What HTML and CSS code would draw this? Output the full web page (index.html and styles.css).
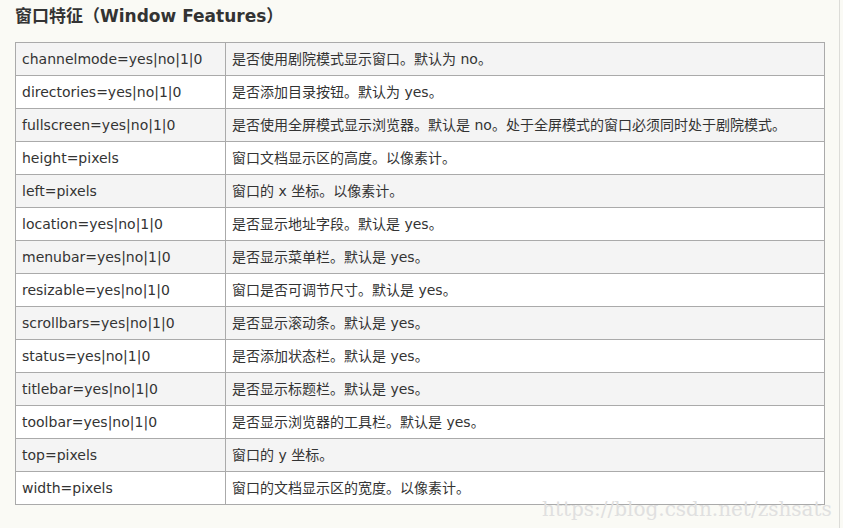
FILE: index.html
```html
<!DOCTYPE html>
<html lang="zh">
<head>
<meta charset="utf-8">
<link rel="stylesheet" href="styles.css">
</head>
<body>
<div class="page">
  <h3 class="title">窗口特征（Window Features）</h3>
  <table class="features">
    <tr><td class="key">channelmode=yes|no|1|0</td><td>是否使用剧院模式显示窗口。默认为 no。</td></tr>
    <tr><td class="key">directories=yes|no|1|0</td><td>是否添加目录按钮。默认为 yes。</td></tr>
    <tr><td class="key">fullscreen=yes|no|1|0</td><td>是否使用全屏模式显示浏览器。默认是 no。处于全屏模式的窗口必须同时处于剧院模式。</td></tr>
    <tr><td class="key">height=pixels</td><td>窗口文档显示区的高度。以像素计。</td></tr>
    <tr><td class="key">left=pixels</td><td>窗口的 x 坐标。以像素计。</td></tr>
    <tr><td class="key">location=yes|no|1|0</td><td>是否显示地址字段。默认是 yes。</td></tr>
    <tr><td class="key">menubar=yes|no|1|0</td><td>是否显示菜单栏。默认是 yes。</td></tr>
    <tr><td class="key">resizable=yes|no|1|0</td><td>窗口是否可调节尺寸。默认是 yes。</td></tr>
    <tr><td class="key">scrollbars=yes|no|1|0</td><td>是否显示滚动条。默认是 yes。</td></tr>
    <tr><td class="key">status=yes|no|1|0</td><td>是否添加状态栏。默认是 yes。</td></tr>
    <tr><td class="key">titlebar=yes|no|1|0</td><td>是否显示标题栏。默认是 yes。</td></tr>
    <tr><td class="key">toolbar=yes|no|1|0</td><td>是否显示浏览器的工具栏。默认是 yes。</td></tr>
    <tr><td class="key">top=pixels</td><td>窗口的 y 坐标。</td></tr>
    <tr><td class="key">width=pixels</td><td>窗口的文档显示区的宽度。以像素计。</td></tr>
  </table>
  <div class="watermark">https://blog.csdn.net/zshsats</div>
</div>
</body>
</html>
```

FILE: styles.css
```css
html, body {
  margin: 0;
  padding: 0;
  background: #fafaf5;
}
body {
  font-family: "DejaVu Sans", "Noto Sans CJK SC", sans-serif;
  color: #333;
  height: 528px;
  overflow: hidden;
}
.page {
  position: relative;
  height: 528px;
  padding: 0 0 0 15px;
  box-sizing: border-box;
  border-right: 1px solid #dcdcd8;
  width: 840px;
}
.title {
  margin: 0;
  padding-top: 6px;
  height: 42px;
  box-sizing: border-box;
  font-size: 17px;
  line-height: 21px;
  font-weight: bold;
  color: #333;
}
.features {
  border-collapse: collapse;
  width: 810px;
  font-size: 14px;
}
.features td {
  border: 1px solid #aaa;
  height: 33px;
  padding: 0 6px;
  box-sizing: border-box;
  line-height: 17px;
  vertical-align: middle;
}
.features tr:nth-child(odd) td {
  background: #f4f4f4;
}
.features tr:nth-child(even) td {
  background: #fff;
}
.features td.key {
  width: 210px;
}
.watermark {
  position: absolute;
  left: 542px;
  top: 497px;
  font-family: "DejaVu Serif", "Liberation Serif", serif;
  font-size: 20px;
  color: #e0e0e0;
  white-space: nowrap;
}
```
